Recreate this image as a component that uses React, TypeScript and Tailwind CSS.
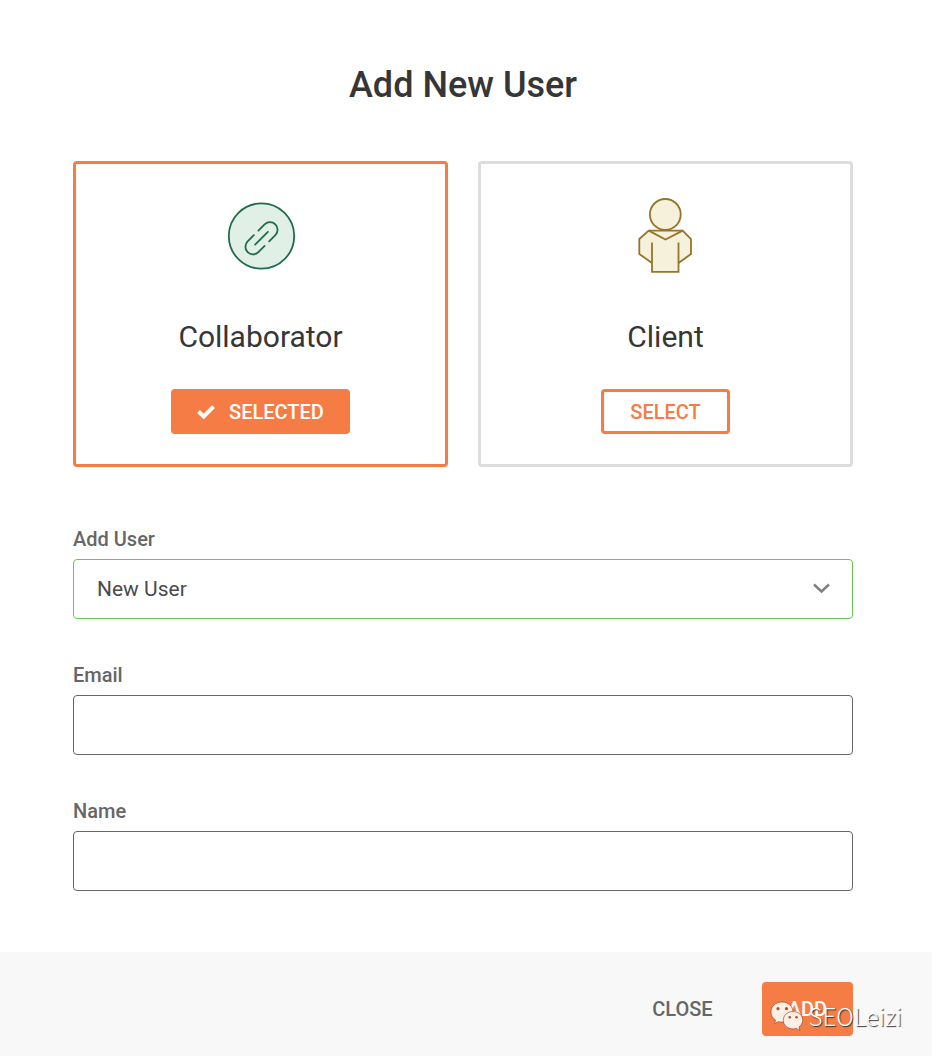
import React, { useState } from "react";

const LinkIcon = () => (
    <svg className="overflow-visible" width="67" height="68" viewBox="0 0 67 68" fill="none" stroke="#1f6b4c" strokeWidth="1.8" strokeLinecap="round">
        <circle cx="34.5" cy="34" r="32.7" fill="#e0f0e6" />
        <g transform="translate(34.5 36.2) rotate(-45)">
            <path d="M-9 0H9" />
            <path d="M3.2 -7.6H12a7.6 7.6 0 0 1 0 15.2H3.2" />
            <path d="M-3.2 -7.6H-12a7.6 7.6 0 0 0 0 15.2H-3.2" />
        </g>
    </svg>
);

const PersonIcon = () => (
    <svg width="55" height="75" viewBox="0 0 55 75" fill="#f6f1da" stroke="#94752c" strokeWidth="1.8">
        <circle cx="27.3" cy="16.4" r="15.4" />
        <path d="M10.7 32.6H44.7L53 41V56L40.5 65V74H14V65L1.3 56V41Z" stroke="none" />
        <path d="M14 65L1.3 56V41L10.7 32.6H44.7L53 41V56L40.5 65" fill="none" />
        <path d="M10.7 32.6L27.5 41.5L44.7 32.6" fill="none" />
        <path d="M14 44.5V73.8H40.5V44.5" fill="none" />
    </svg>
);

const CheckIcon = () => (
    <svg width="18" height="14" viewBox="0 0 18 14" fill="none" stroke="currentColor" strokeWidth="4">
        <path d="M1.5 6.5L6.7 11.5L16.5 1.7" />
    </svg>
);

const WechatIcon = () => (
    <svg width="34" height="31" viewBox="0 0 34 31" fill="#fdeee6" stroke="#9a4d2b" strokeWidth="0.7">
        <path d="M12 1C5.5 1 1 5.5 1 11c0 3.5 1.7 6 4.5 8L4.6 22.5L8.6 20.7c1.2.3 2.3.4 3.4.4 6.5 0 11-4.5 11-10.1S18.5 1 12 1Z" />
        <path d="M23 10.5c-5.6 0-9.7 3.9-9.7 8.7s4.1 8.7 9.7 8.7c1.2 0 2.2-.2 3.2-.5l3.6 2-.8-3.4c2.2-1.6 3.7-4 3.7-6.8 0-4.8-4.1-8.7-9.7-8.7Z" />
        <g fill="#b0522a" stroke="none">
            <circle cx="8" cy="7.7" r="1.6" />
            <circle cx="16.5" cy="7.7" r="1.6" />
            <circle cx="19.7" cy="16.3" r="1.3" />
            <circle cx="26.5" cy="16.3" r="1.3" />
        </g>
    </svg>
);

interface RoleCardProps {
    title: string;
    icon: React.ReactNode;
    selected: boolean;
    onSelect: () => void;
}

const RoleCard: React.FC<RoleCardProps> = ({ title, icon, selected, onSelect }) => {
    return (
        <div className={`flex flex-1 flex-col items-center rounded border-3 pt-[34px] pb-[30px] ${selected ? "border-[#f57c45]" : "border-[#dddddd]"}`}>
            <div className="flex h-[75px] items-center">{icon}</div>
            <h2 className="mt-11 text-[30px] leading-10 text-[#363636]">{title}</h2>
            {selected ? (
                <button type="button" aria-pressed="true" className="mt-8 flex h-[45px] items-center gap-[14px] rounded bg-[#f57c45] px-[26px] text-[20px] font-medium text-white">
                    <CheckIcon />
                    SELECTED
                </button>
            ) : (
                <button type="button" aria-pressed="false" onClick={onSelect} className="mt-8 flex h-[45px] items-center rounded border-3 border-[#f57c45] px-[26px] text-[20px] font-medium text-[#f57c45]">
                    SELECT
                </button>
            )}
        </div>
    );
};

interface TextFieldProps {
    id: string;
    label: string;
    type: string;
}

const TextField: React.FC<TextFieldProps> = ({ id, label, type }) => (
    <div className="flex flex-col gap-2">
        <label htmlFor={id} className="text-[20px] leading-6 font-medium text-[#666666]">{label}</label>
        <input id={id} type={type} className="h-[60px] w-full rounded border border-[#666666] px-[23px] text-[21px] text-[#4a4a4a] outline-none" />
    </div>
);

export default function App() {
    const [role, setRole] = useState("collaborator");

    return (
        <form className="bg-white font-[Roboto,sans-serif]" onSubmit={(e) => e.preventDefault()}>
            <div className="pt-[61px] pr-[79px] pb-[61px] pl-[73px]">
                <h1 className="text-center text-[36px] leading-12 font-medium text-[#363636]">Add New User</h1>
                <div className="mt-[52px] flex gap-[30px]">
                    <RoleCard title="Collaborator" icon={<LinkIcon />} selected={role === "collaborator"} onSelect={() => setRole("collaborator")} />
                    <RoleCard title="Client" icon={<PersonIcon />} selected={role === "client"} onSelect={() => setRole("client")} />
                </div>
                <div className="mt-[60px] flex flex-col gap-11">
                    <div className="flex flex-col gap-2">
                        <label htmlFor="user" className="text-[20px] leading-6 font-medium text-[#666666]">Add User</label>
                        <div className="relative">
                            <select id="user" className="h-[60px] w-full appearance-none rounded border border-[#6bc84f] bg-white px-[23px] pt-px text-[21px] text-[#4a4a4a] outline-none">
                                <option>New User</option>
                            </select>
                            <svg className="pointer-events-none absolute top-6 right-[23px]" width="17" height="11" viewBox="0 0 17 11" fill="none" stroke="#808080" strokeWidth="2.4">
                                <path d="M1 1.5L8.5 8.5L16 1.5" />
                            </svg>
                        </div>
                    </div>
                    <TextField id="email" label="Email" type="email" />
                    <TextField id="name" label="Name" type="text" />
                </div>
            </div>
            <div className="relative flex justify-end gap-[49px] bg-[#f8f8f8] pt-[30px] pr-[79px] pb-5 text-[20px] font-medium">
                <button type="button" className="text-[#666666]">CLOSE</button>
                <button type="submit" className="h-[54px] rounded bg-[#f57c45] px-[26px] text-white">ADD</button>
                <div className="pointer-events-none absolute right-[30px] bottom-[22px] flex items-center gap-[5px] font-['Noto_Sans_CJK_SC',sans-serif] text-[24px] leading-9 font-light text-white">
                    <WechatIcon />
                    <span className="[text-shadow:1px_1px_1px_#333333]">SEOLeizi</span>
                </div>
            </div>
        </form>
    );
}
